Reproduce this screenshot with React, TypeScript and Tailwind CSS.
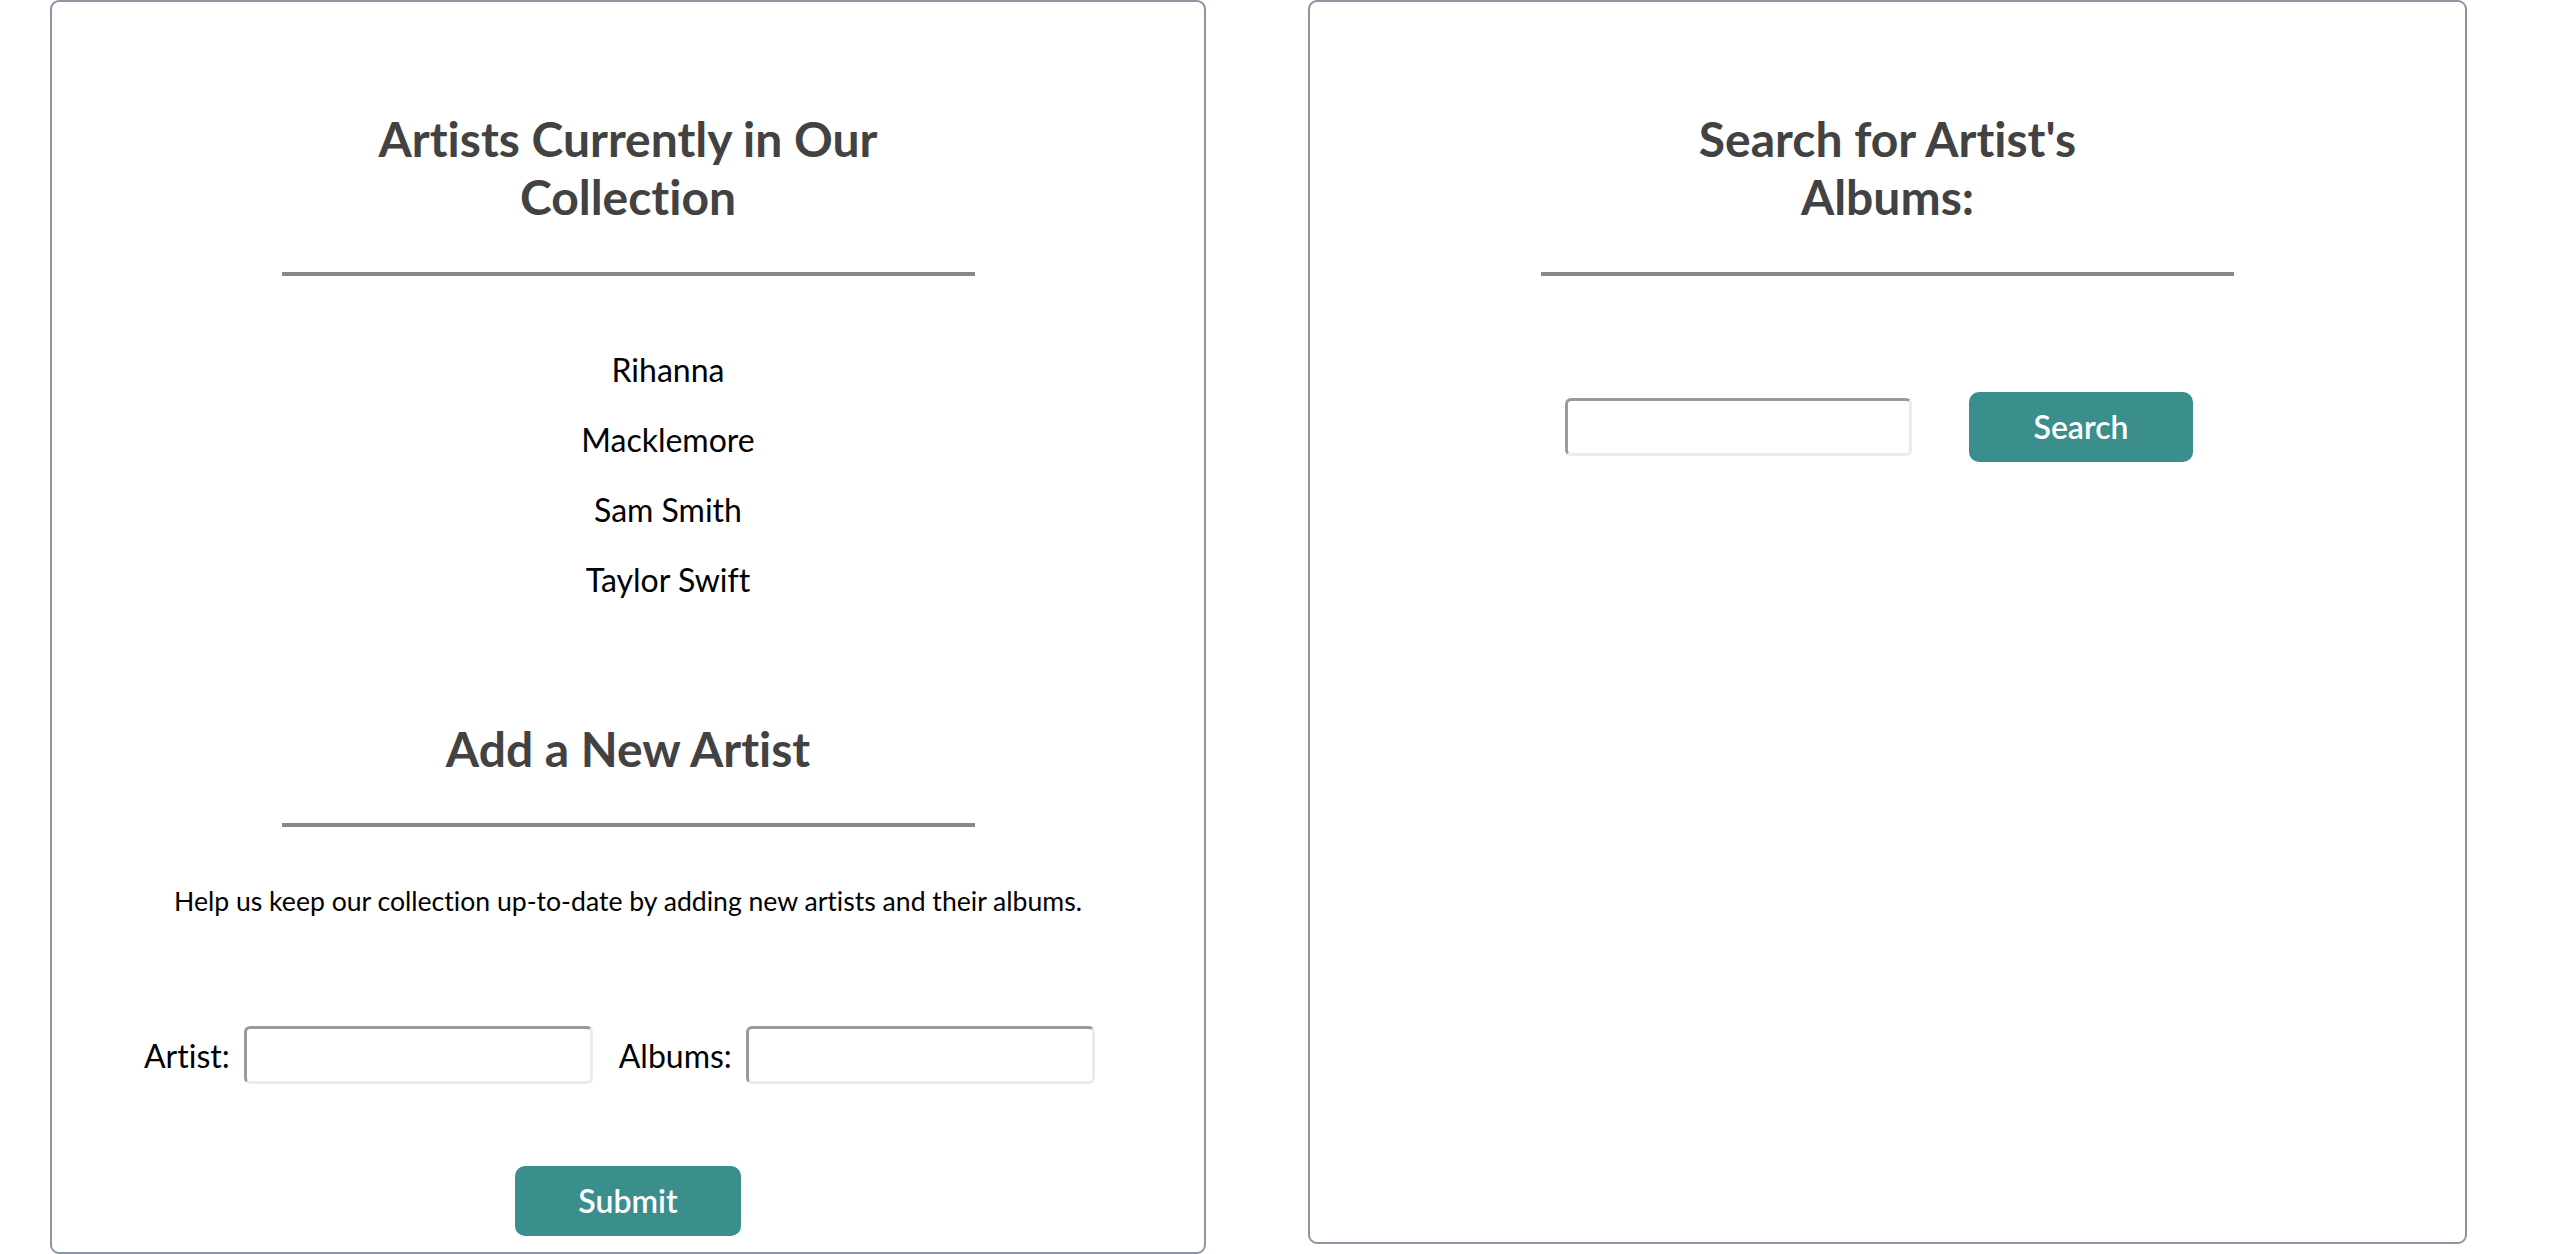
import React from "react";

// Две карточки: список артистов с формой добавления и поиск альбомов
const artists = ["Rihanna", "Macklemore", "Sam Smith", "Taylor Swift"];

function Divider() {
  return <div className="h-[4px] w-[693px] bg-[#888888]" />;
}

function TextInput({ width }: { width: string }) {
  return (
    <input
      type="text"
      className={`${width} h-[58px] rounded-[6px] border-[3px] border-t-[#9a9a9a] border-l-[#9a9a9a] border-b-[#ececec] border-r-[#ececec] bg-white outline-none`}
    />
  );
}

export default function App() {
  return (
    <div className="flex min-h-screen items-start gap-[102px] bg-white pl-[50px] font-[Lato,sans-serif] [font-variant-ligatures:none]">
      {/* левая карточка */}
      <section className="flex w-[1156px] flex-col items-center rounded-[9px] border-2 border-[#8a96a3] pt-[108px] pb-[16px]">
        <h2 className="w-[520px] text-center text-[48px] font-bold leading-[58px] text-[#424242]">
          Artists Currently in Our Collection
        </h2>
        <div className="mt-[46px]">
          <Divider />
        </div>
        <ul className="mt-[59px] pl-[80px] text-center text-[32px] leading-[70px] text-black">
          {artists.map((a) => (
            <li key={a}>{a}</li>
          ))}
        </ul>
        <h2 className="mt-[105px] text-center text-[48px] font-bold leading-[58px] text-[#424242]">
          Add a New Artist
        </h2>
        <div className="mt-[45px]">
          <Divider />
        </div>
        <p className="mt-[58px] text-center text-[26.6px] leading-[32px] text-black">
          Help us keep our collection up-to-date by adding new artists and their albums.
        </p>
        <div className="mt-[109px] ml-[92px] flex items-center self-start text-[32px] leading-[35px] text-black">
          <label className="mr-[14px]">Artist:</label>
          <TextInput width="w-[349px]" />
          <label className="ml-[26px] mr-[14px]">Albums:</label>
          <TextInput width="w-[349px]" />
        </div>
        <button className="mt-[82px] h-[70px] w-[226px] rounded-[10px] bg-[#3a8e8c] text-[32px] font-semibold text-white">
          Submit
        </button>
      </section>

      {/* правая карточка — поиск */}
      <section className="flex h-[1244px] w-[1159px] flex-col items-center rounded-[9px] border-2 border-[#8a96a3] pt-[108px]">
        <h2 className="w-[520px] text-center text-[48px] font-bold leading-[58px] text-[#424242]">
          Search for Artist's Albums:
        </h2>
        <div className="mt-[46px]">
          <Divider />
        </div>
        <div className="mt-[116px] ml-[255px] flex items-center gap-[57px] self-start">
          <TextInput width="w-[347px]" />
          <button className="h-[70px] w-[224px] rounded-[10px] bg-[#3a8e8c] text-[32px] font-semibold text-white">
            Search
          </button>
        </div>
      </section>
    </div>
  );
}
